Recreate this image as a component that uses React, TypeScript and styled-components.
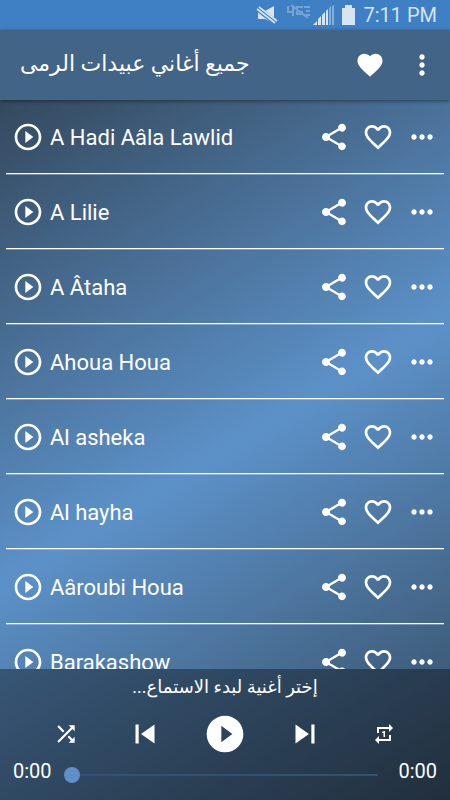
import React from "react";
import styled, { createGlobalStyle } from "styled-components";
import {
  MdFavorite,
  MdFavoriteBorder,
  MdMoreHoriz,
  MdMoreVert,
  MdPlayCircleFilled,
  MdPlayCircleOutline,
  MdRepeatOne,
  MdShare,
  MdShuffle,
  MdSkipNext,
  MdSkipPrevious,
} from "react-icons/md";

const GlobalStyle = createGlobalStyle`
  *, *::before, *::after { box-sizing: border-box; }
  body {
    margin: 0;
    font-family: Roboto, "DejaVu Sans", sans-serif;
    color: #fff;
  }
`;

const Screen = styled.div`
  display: flex;
  flex-direction: column;
  height: 100vh;
`;

const StatusBar = styled.div`
  display: flex;
  flex: none;
  align-items: center;
  justify-content: flex-end;
  height: 30px;
  padding-right: 13px;
  background: #3f80c4;
  color: #d6e4f4;
`;

const Clock = styled.time`
  margin-left: 8px;
  font-size: 20px;
  line-height: 32px;
`;

const AppBar = styled.header`
  position: relative;
  z-index: 1;
  display: flex;
  flex: none;
  align-items: center;
  height: 70px;
  padding: 0 12px 0 20px;
  background: #426486;
  box-shadow: 0 1px 4px rgba(0, 0, 0, 0.45);
`;

const Title = styled.h1`
  flex: 1;
  margin: 0;
  padding-bottom: 2px;
  font-size: 22px;
  font-weight: 400;
  line-height: 32px;
  text-align: left;
`;

const IconButton = styled.button<{ $size?: number }>`
  display: flex;
  flex: none;
  align-items: center;
  justify-content: center;
  padding: 0;
  border: 0;
  background: none;
  color: inherit;
  cursor: pointer;

  svg {
    flex: none;
    width: ${({ $size = 32 }) => $size}px;
    height: ${({ $size = 32 }) => $size}px;
  }
`;

const BarActions = styled.div`
  display: flex;
  gap: 21px;
  align-items: center;
`;

const Content = styled.main`
  display: flex;
  flex: 1;
  flex-direction: column;
  min-height: 0;
  background: linear-gradient(149deg, #34495e, #5c91c8 50%, #34495e);
`;

const SongList = styled.ul`
  flex: 1;
  min-height: 0;
  margin: -1px 0 0;
  padding: 0 6px;
  overflow-y: auto;
  list-style: none;
  scrollbar-width: none;
`;

const SongRow = styled.li`
  display: flex;
  align-items: center;
  height: 75px;
  padding: 2px 6px 0;
  border-bottom: 1px solid #fff;
  box-shadow: 0 1px rgba(255, 255, 255, 0.3);
`;

const SongButton = styled(IconButton)`
  flex: 1;
  gap: 6px;
  justify-content: flex-start;
  font-family: inherit;
  font-size: 22px;
  line-height: 32px;
`;

const SongName = styled.span`
  padding-top: 2px;
`;

const RowActions = styled.div`
  display: flex;
  gap: 12px;
`;

const Player = styled.footer`
  flex: none;
  height: 131px;
  padding-top: 4px;
  background: rgba(0, 0, 0, 0.35);
`;

const Hint = styled.p`
  margin: 0 0 8px;
  font-size: 18px;
  line-height: 28px;
  text-align: center;
`;

const Controls = styled.div`
  display: grid;
  grid-template-columns: repeat(5, 1fr);
  height: 50px;
  padding: 0 26px;
`;

const SeekRow = styled.div`
  display: flex;
  align-items: center;
  padding: 0 13px;
  font-size: 20px;
  line-height: 16px;
`;

const Seek = styled.input`
  flex: 1;
  min-width: 0;
  height: 16px;
  margin: 8px 20px 0 12px;
  appearance: none;
  background: none;

  &::-webkit-slider-runnable-track {
    height: 2px;
    background: #34516f;
  }

  &::-webkit-slider-thumb {
    width: 16px;
    height: 16px;
    margin-top: -7px;
    appearance: none;
    border-radius: 50%;
    background: #5e8fc9;
  }
`;

const songs = [
  "A Hadi Aâla Lawlid",
  "A Lilie",
  "A Âtaha",
  "Ahoua Houa",
  "Al asheka",
  "Al hayha",
  "Aâroubi Houa",
  "Barakashow",
];

const StatusIcons = () => (
  <svg width="99" height="20" viewBox="0 0 99 20" aria-hidden="true" fill="currentColor">
    <path d="M2 6h7l9-5v18l-9-5H2z" />
    <path d="M0 2l20 16" stroke="#3f80c4" strokeWidth="6" />
    <path d="M3 2l18 14M1 4l18 14" stroke="currentColor" strokeWidth="1.6" />
    <g opacity=".35" fill="none" stroke="currentColor" strokeWidth="2">
      <path d="M32 1v6h6M37 0v11M47 2h-6v7h5V6M48 2h6M50 6h4M49 10h5M35 0l17 13" />
    </g>
    <path d="M57 20l4-4v4zM62 20v-6l3-3v9zM66 20v-10l3-3v13zM70 20V6l2-2v16z" />
    <path d="M73 20V3l2-2v19zM76 20V1l2-1v20z" opacity=".45" />
    <path d="M86 3h3V0h7v3h3v17H86z" />
  </svg>
);

export default function App() {
  return (
    <>
      <GlobalStyle />
      <Screen>
        <StatusBar>
          <StatusIcons />
          <Clock>7:11 PM</Clock>
        </StatusBar>
        <AppBar>
          <Title dir="rtl" lang="ar">جميع أغاني عبيدات الرمى</Title>
          <BarActions>
            <IconButton aria-label="Favorites" $size={30}><MdFavorite /></IconButton>
            <IconButton aria-label="Menu"><MdMoreVert /></IconButton>
          </BarActions>
        </AppBar>
        <Content>
          <SongList>
            {songs.map((song) => (
              <SongRow key={song}>
                <SongButton><MdPlayCircleOutline /><SongName>{song}</SongName></SongButton>
                <RowActions>
                  <IconButton aria-label={`Share ${song}`}><MdShare /></IconButton>
                  <IconButton aria-label={`Favorite ${song}`}><MdFavoriteBorder /></IconButton>
                  <IconButton aria-label={`More options for ${song}`}><MdMoreHoriz /></IconButton>
                </RowActions>
              </SongRow>
            ))}
          </SongList>
          <Player>
            <Hint dir="rtl" lang="ar">إختر أغنية لبدء الاستماع...</Hint>
            <Controls>
              <IconButton aria-label="Shuffle" $size={26}><MdShuffle /></IconButton>
              <IconButton aria-label="Previous" $size={38}><MdSkipPrevious /></IconButton>
              <IconButton aria-label="Play" $size={44}><MdPlayCircleFilled /></IconButton>
              <IconButton aria-label="Next" $size={38}><MdSkipNext /></IconButton>
              <IconButton aria-label="Repeat one" $size={24}><MdRepeatOne /></IconButton>
            </Controls>
            <SeekRow>
              <span>0:00</span>
              <Seek type="range" min={0} max={100} defaultValue={0} aria-label="Position" />
              <span>0:00</span>
            </SeekRow>
          </Player>
        </Content>
      </Screen>
    </>
  );
}
